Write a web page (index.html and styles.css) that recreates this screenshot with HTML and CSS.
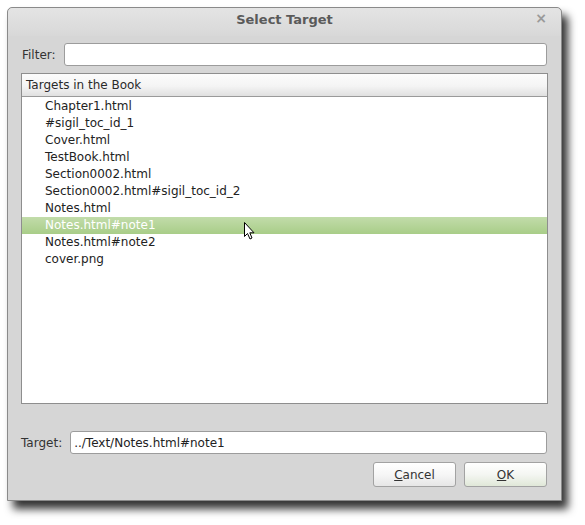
FILE: index.html
```html
<!DOCTYPE html>
<html>
<head>
<meta charset="utf-8">
<link rel="stylesheet" href="styles.css">
</head>
<body>
<div class="window">
  <div class="titlebar">
    <span class="title">Select Target</span>
    <span class="close">×</span>
  </div>
  <div class="content">
    <div class="filter-row">
      <label class="label">Filter:</label>
      <div class="input filter-input"></div>
    </div>
    <div class="list">
      <div class="list-header">Targets in the Book</div>
      <div class="items">
        <div class="item">Chapter1.html</div>
        <div class="item">#sigil_toc_id_1</div>
        <div class="item">Cover.html</div>
        <div class="item">TestBook.html</div>
        <div class="item">Section0002.html</div>
        <div class="item">Section0002.html#sigil_toc_id_2</div>
        <div class="item">Notes.html</div>
        <div class="item selected">Notes.html#note1</div>
        <div class="item">Notes.html#note2</div>
        <div class="item">cover.png</div>
        <svg class="cursor" width="13" height="20" viewBox="0 0 13 20">
          <path d="M1.5 1.5 L1.5 15.5 L4.5 12.5 L7 18 L9 17 L6.8 11.8 L11 11.8 Z" fill="#fff" stroke="#000" stroke-width="1" stroke-linejoin="miter"/>
        </svg>
      </div>
    </div>
    <div class="target-row">
      <label class="label">Target:</label>
      <div class="input target-input">../Text/Notes.html#note1</div>
    </div>
    <div class="buttons">
      <button class="btn"><u>C</u>ancel</button>
      <button class="btn ok"><u>O</u>K</button>
    </div>
  </div>
</div>
</body>
</html>
```

FILE: styles.css
```css
html, body {
  margin: 0;
  padding: 0;
  background: #ffffff;
}
body {
  font-family: "DejaVu Sans", "Liberation Sans", sans-serif;
  font-size: 12px;
  color: #303030;
  height: 525px;
}
.window {
  margin: 7px 0 0 7px;
  width: 553px;
  height: 492px;
  border: 1px solid #8a8a8a;
  border-radius: 5px 5px 0 0;
  background: #d6d6d6;
  box-shadow: 6px 8px 8px rgba(0, 0, 0, 0.8);
  display: flex;
  flex-direction: column;
}
.titlebar {
  height: 28px;
  box-sizing: border-box;
  padding-bottom: 6px;
  display: flex;
  align-items: center;
  justify-content: center;
  position: relative;
  border-radius: 5px 5px 0 0;
  background: linear-gradient(#e4e4e4, #d8d8d8);
}
.title {
  font-weight: bold;
  font-size: 13px;
  color: #5a5a5a;
}
.close {
  position: absolute;
  right: 14px;
  top: 2px;
  font-size: 14px;
  color: #9a9a9a;
  font-weight: bold;
}
.content {
  padding: 7px 13px 0 13px;
  display: flex;
  flex-direction: column;
}
.filter-row {
  display: flex;
  align-items: center;
  gap: 8px;
  padding-left: 1px;
  margin-right: 1px;
}
.label {
  color: #333;
}
.input {
  height: 21px;
  background: #fff;
  border: 1px solid #9c9c9c;
  border-radius: 3px;
  box-sizing: content-box;
  display: flex;
  align-items: center;
  padding-left: 3px;
  color: #222;
}
.filter-input {
  flex: 1;
}
.list {
  margin-top: 7px;
  height: 329px;
  border: 1px solid #8e8e8e;
  background: #fff;
  display: flex;
  flex-direction: column;
}
.list-header {
  height: 23px;
  flex: none;
  box-sizing: border-box;
  border-bottom: 1px solid #9a9a9a;
  background: linear-gradient(#fcfcfc 0%, #f4f4f4 55%, #e0e0e0 100%);
  padding-left: 4px;
  display: flex;
  align-items: center;
  color: #2a2a2a;
}
.items {
  position: relative;
  padding-top: 1px;
}
.item {
  height: 17px;
  line-height: 17px;
  padding-left: 23px;
  color: #222;
}
.item.selected {
  background: linear-gradient(#c2dcaa, #a8cd88);
  color: #fff;
}
.cursor {
  position: absolute;
  left: 221px;
  top: 124px;
}
.target-row {
  margin-top: 27px;
  display: flex;
  align-items: center;
  gap: 8px;
  margin-right: 1px;
}
.target-input {
  flex: 1;
}
.buttons {
  margin-top: 8px;
  display: flex;
  justify-content: flex-end;
  gap: 8px;
  margin-right: 1px;
}
.btn {
  width: 83px;
  height: 25px;
  font-family: "DejaVu Sans", "Liberation Sans", sans-serif;
  font-size: 12px;
  color: #333;
  border: 1px solid #a2a2a2;
  border-radius: 3px;
  background: linear-gradient(#ffffff 0%, #f6f6f6 50%, #e6e6e6 100%);
  padding: 0;
}
.btn.ok {
  background: linear-gradient(#ffffff 0%, #f4f6f2 50%, #e0e8d8 100%);
}
```
